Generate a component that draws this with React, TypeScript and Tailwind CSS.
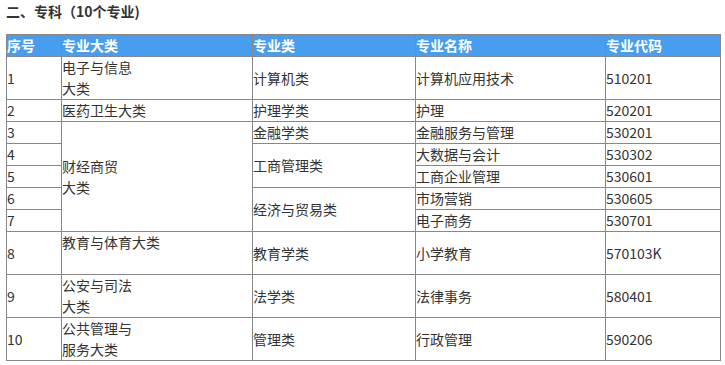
import React from "react";

const cell = "border border-[#888] p-0 align-middle text-left leading-[21px]";

export default function App() {
  return (
    <div className="bg-white w-[725px] h-[365px] text-[14px] text-[#333] overflow-hidden" style={{ fontFamily: '"Noto Sans CJK SC", "Noto Sans", sans-serif' }}>
      <div className="pl-[6px] h-[22px] leading-[22px] font-bold text-[14px] text-[#333]">二、专科（10个专业)</div>
      <table className="ml-[6px] mt-[12px] border-collapse table-fixed w-[714px]">
        <colgroup>
          <col className="w-[55px]" />
          <col className="w-[191px]" />
          <col className="w-[163px]" />
          <col className="w-[190px]" />
          <col className="w-[115px]" />
        </colgroup>
        <thead>
          <tr className="bg-[#479ef1] text-white font-bold h-[22px]">
            <th className={cell}>序号</th>
            <th className={cell}>专业大类</th>
            <th className={cell}>专业类</th>
            <th className={cell}>专业名称</th>
            <th className={cell}>专业代码</th>
          </tr>
        </thead>
        <tbody>
          <tr className="h-[43px]">
            <td className={cell}>1</td>
            <td className={cell}>电子与信息<br />大类</td>
            <td className={cell}>计算机类</td>
            <td className={cell}>计算机应用技术</td>
            <td className={cell}>510201</td>
          </tr>
          <tr className="h-[22px]">
            <td className={cell}>2</td>
            <td className={cell}>医药卫生大类</td>
            <td className={cell}>护理学类</td>
            <td className={cell}>护理</td>
            <td className={cell}>520201</td>
          </tr>
          <tr className="h-[22px]">
            <td className={cell}>3</td>
            <td className={cell} rowSpan={5}>财经商贸<br />大类</td>
            <td className={cell}>金融学类</td>
            <td className={cell}>金融服务与管理</td>
            <td className={cell}>530201</td>
          </tr>
          <tr className="h-[22px]">
            <td className={cell}>4</td>
            <td className={cell} rowSpan={2}>工商管理类</td>
            <td className={cell}>大数据与会计</td>
            <td className={cell}>530302</td>
          </tr>
          <tr className="h-[22px]">
            <td className={cell}>5</td>
            <td className={cell}>工商企业管理</td>
            <td className={cell}>530601</td>
          </tr>
          <tr className="h-[22px]">
            <td className={cell}>6</td>
            <td className={cell} rowSpan={2}>经济与贸易类</td>
            <td className={cell}>市场营销</td>
            <td className={cell}>530605</td>
          </tr>
          <tr className="h-[22px]">
            <td className={cell}>7</td>
            <td className={cell}>电子商务</td>
            <td className={cell}>530701</td>
          </tr>
          <tr className="h-[43px]">
            <td className={cell}>8</td>
            <td className={cell}>教育与体育大类<br />&nbsp;</td>
            <td className={cell}>教育学类</td>
            <td className={cell}>小学教育</td>
            <td className={cell}>570103K</td>
          </tr>
          <tr className="h-[43px]">
            <td className={cell}>9</td>
            <td className={cell}>公安与司法<br />大类</td>
            <td className={cell}>法学类</td>
            <td className={cell}>法律事务</td>
            <td className={cell}>580401</td>
          </tr>
          <tr className="h-[43px]">
            <td className={cell}>10</td>
            <td className={cell}>公共管理与<br />服务大类</td>
            <td className={cell}>管理类</td>
            <td className={cell}>行政管理</td>
            <td className={cell}>590206</td>
          </tr>
        </tbody>
      </table>
    </div>
  );
}
